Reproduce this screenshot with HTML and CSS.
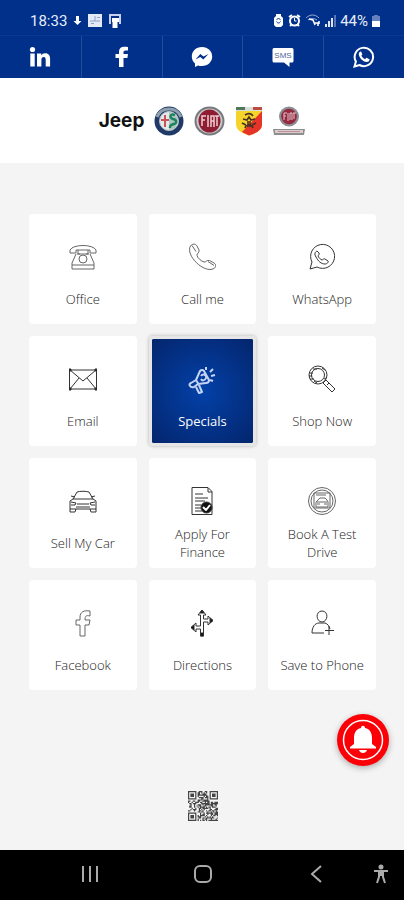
FILE: index.html
```html
<!DOCTYPE html>
<html lang="en">
<head>
  <meta charset="UTF-8">
  <title>Digital Business Card</title>
  <meta name="viewport" content="width=device-width, initial-scale=1.0">
  <link rel="stylesheet" href="styles.css">
</head>
<body>
  <div class="status-bar">
    <div class="status-group">
      <span>18:33</span>
      <svg width="9" height="12" viewBox="0 0 9 12" fill="#fff"><path d="M3 1h3v5h2.500L4.500 10 .5 6H3z"/></svg>
      <svg width="14" height="13" viewBox="0 0 14 13"><path fill="#e4e9f6" d="M0 0h14v13H0z"/><path stroke="#8e9fce" d="M7 2v5M2 7h10M3 9.500h3M9 3.500h3" fill="none"/></svg>
      <svg width="14" height="14" viewBox="0 0 14 14"><path fill="none" stroke="#c9d2ea" stroke-width="2" d="M2 10V1h10v9"/><path fill="#fff" d="M4 4h7v4H9.500v6h-5V8H4z"/></svg>
    </div>
    <div class="status-group right">
      <svg width="11" height="13" viewBox="0 0 11 13"><path fill="#fff" d="M3 0h5v2l2 2v7l-2 2H3l-2-2V4l2-2z"/><path fill="none" stroke="#00308a" d="M3.500 6c1-2 3-2 4 0M3.500 7.500c1 2 3 2 4 0"/></svg>
      <svg width="13" height="13" viewBox="0 0 13 13"><circle cx="6.500" cy="7" r="4.500" fill="none" stroke="#fff" stroke-width="2"/><path fill="none" stroke="#fff" stroke-width="2" d="M1 3l3-2M12 3L9 1M2 12l2-2M11 12l-2-2"/><path fill="none" stroke="#fff" d="M6.500 4v3h2"/></svg>
      <svg width="16" height="13" viewBox="0 0 16 13"><path fill="none" stroke="#9fafd8" d="M1 4c4-4 9-4 13 0M3 6c3-2 6-2 9 0"/><path fill="none" stroke="#fff" stroke-width="1.500" d="M4 5l4 1 2 5M10 9h3v3M14 7v3"/></svg>
      <svg width="11" height="12" viewBox="0 0 11 12"><path fill="#dfe5f4" d="M0 9h2v3H0zM3 6h2v6H3zM6 3h2v9H6z"/><path fill="#5a76b6" d="M9 0h2v12H9z"/></svg>
      <span>44%</span>
      <svg width="8" height="12" viewBox="0 0 8 12"><path fill="#6480bd" d="M2 0h4v1h2v5H0V1h2z"/><path fill="#fff" d="M0 6h8v6H0z"/></svg>
    </div>
  </div>

  <nav class="social">
    <a href="#" aria-label="LinkedIn">
      <svg width="22" height="22" viewBox="0 0 22 22" fill="#fff"><circle cx="3.500" cy="3.500" r="2.600"/><path d="M1.300 7.500h4.400V20.500H1.300zM8 7.500h4.200v1.700c.8-1.300 2-2 3.900-2 3.800 0 5 2.400 5 5.900v7.400h-4.400v-6.600c0-1.900-.5-3-1.900-3-1.700 0-2.400 1.200-2.400 3v6.600H8z"/></svg>
    </a>
    <a href="#" aria-label="Facebook">
      <svg width="22" height="22" viewBox="0 0 22 22" fill="#fff"><path d="M8 21v-9H4.500V8H8V5.500C8 2.300 10 .7 13 .7c1.800 0 3.300.1 4 .2v3.600h-2.500c-1.600 0-2 .8-2 1.900V8H17l-.6 4h-3.900v9z"/></svg>
    </a>
    <a href="#" aria-label="Messenger">
      <svg width="22" height="22" viewBox="0 0 22 22"><path fill="#fff" d="M11 1C5 1 .8 5.200.8 10.600c0 2.900 1.200 5.300 3.200 7V21l3-1.500c1.200.4 2.600.6 4 .6 6 0 10.200-4.200 10.200-9.500S17 1 11 1z"/><path fill="#00308a" d="M4.500 13.500L9.300 8l3.200 2.600 5-2.600-5.200 5.500-3-2.500z"/></svg>
    </a>
    <a href="#" aria-label="SMS">
      <svg width="22" height="22" viewBox="0 0 22 22"><path fill="#fff" d="M2 2h18q1.500 0 1.500 1.500v11.500q0 1.500-1.500 1.500h-2.500V21L12 16.500H2Q.5 16.500.5 15V3.500Q.5 2 2 2z"/><text class="sms-text" x="11" y="12" text-anchor="middle">SMS</text></svg>
    </a>
    <a href="#" aria-label="WhatsApp">
      <svg width="22" height="22" viewBox="0 0 22 22"><path fill="none" stroke="#fff" stroke-width="2" d="M1.500 20.500l1.400-5A9.200 9.200 0 1 1 6.500 19z"/><path fill="#fff" d="M7.500 5.500c-1 .3-1.900 1.500-1.700 2.900.5 3.500 4 7 7.700 7.600 1.500.2 2.800-.8 3-2 .1-.7 0-.9-.4-1.100l-2.200-1c-.5-.2-.7 0-1 .3l-.8 1c-1.700-.6-3-1.900-3.700-3.400l.7-1c.3-.4.2-.6 0-1l-.8-1.900c-.2-.4-.4-.5-.8-.4z"/></svg>
    </a>
  </nav>

  <header class="brands">
    <span class="jeep">Jeep</span>
    <svg width="30" height="30" viewBox="0 0 30 30" role="img" aria-label="Alfa Romeo">
      <circle cx="15" cy="15" r="14.500" fill="#203a68"/>
      <path d="M3 11a13 13 0 0 1 24 0" fill="none" stroke="#8ea0ad" stroke-width="3"/>
      <circle cx="15" cy="15" r="9.500" fill="#e5e8e6" stroke="#b7c1c7"/>
      <path d="M15 6a9 9 0 0 1 0 18z" fill="#a7c8bd"/>
      <path d="M7 14h8M11 9v12" stroke="#c9525a" stroke-width="2"/>
      <path d="M21 9c-5-2-6 3-2 4s4 4 1 5-4 1-4 4" fill="none" stroke="#1e8262" stroke-width="2.500"/>
    </svg>
    <svg width="31" height="30" viewBox="0 0 31 30" role="img" aria-label="Fiat">
      <ellipse cx="15.500" cy="15" rx="15" ry="14.500" fill="#77797c"/>
      <ellipse cx="15.500" cy="15" rx="13" ry="12.500" fill="#c9c9cb"/>
      <ellipse cx="15.500" cy="15" rx="11" ry="11.500" fill="#8e1d32"/>
      <path d="M8 20V10h4M8 14h3M14 9v12M17 21V10h3v11M17 15h3M21 10h4M23 10v10" fill="none" stroke="#edcbd1" stroke-width="1.500"/>
    </svg>
    <svg width="28" height="30" viewBox="0 0 28 30" role="img" aria-label="Abarth">
      <path d="M1 1h26v17c0 6-5 9-13 11.500C6 27 1 24 1 18z" fill="#f5d32a"/>
      <path d="M27 5v13c0 6-5 9-13 11.500L7 26z" fill="#e6342a"/>
      <path d="M1 1h26v4H1z" fill="#d8ddd6"/><path d="M1 1h9v3H1z" fill="#53775d"/><path d="M18 1h9v3h-9z" fill="#bd4b43"/>
      <path d="M10 9c3-2 6-2 8 1M8 13l4 1 2-3 2 3 4-1M7 17l4 2M21 17l-4 2M10 22c1-4 7-4 8 0M13 15v6M15 15v6" fill="none" stroke="#4a3023" stroke-width="1.600"/>
    </svg>
    <svg width="32" height="30" viewBox="0 0 32 30" role="img" aria-label="Fiat Professional">
      <circle cx="16" cy="10.500" r="10" fill="#8c9095"/><circle cx="16" cy="10.500" r="7.800" fill="#942940"/>
      <path d="M11 14V7h3M11 10h2M15 7v8M17 14V7h2v7M20 7h3M21 7v6" fill="none" stroke="#e6c8cf"/>
      <path d="M0 23h32l-1 6H1z" fill="#8e8e90"/><path d="M2 24h28v3H2z" fill="#d8cbcc"/><path d="M5 25.500h22" stroke="#c58f97"/>
    </svg>
  </header>

  <main class="content">
    <div class="grid">
      <a href="#" class="card">
        <svg viewBox="0 0 28 28"><path d="M1 10V7c3-6 23-6 26 0v3h-6V7H7v3zM9 7v4h10V7M7 11l-4 9v6h22v-6l-4-9M3 22h22M8 11h3M17 11h3"/><circle cx="14" cy="16" r="4"/></svg>
        <span>Office</span>
      </a>
      <a href="#" class="card">
        <svg viewBox="0 0 28 28"><path d="M2.500 3c2-2.500 5-2.500 6.500 0l2 4c1 2.500-2.500 3.500-2 5.500 1 3 4 5.500 7 6.500 2 .5 3-2.500 5.500-1.500l4.500 2.500c2.500 1.500 2 4 0 5.500C16 31-3 12 2.500 3zM4 2.500l4 6M20 18.500l6 4"/></svg>
        <span>Call me</span>
      </a>
      <a href="#" class="card dark">
        <svg viewBox="0 0 28 28"><path d="M2 26l2-7a12 12 0 1 1 5 5zM9 8c-2 1-3 3-1 6 2 4 5 7 9 7 2 0 4-2 3-3l-3-2c-1-1-2 1-3 1-2-1-3-2-4-4 0-1 2-1 1-3z"/></svg>
        <span>WhatsApp</span>
      </a>
      <a href="#" class="card dark">
        <svg viewBox="0 0 28 28"><path d="M.5 5h27v19H.5zM1 5l13 11L27 5M1 24l9-11M27 24l-9-11"/><path class="solid" d="M0 4h2v2H0zM26 4h2v2h-2zM0 23h2v2H0zM26 23h2v2h-2z"/></svg>
        <span>Email</span>
      </a>
      <a href="#" class="card active">
        <svg viewBox="0 0 28 28"><path d="M3 17l5-3 4-9q2-2 4 0l5 9q0 3-3 3l-8 1-4 3c-4 1-6-3-3-4zM8 14l3 5M8 21l3 6 3-1-3-7M13 10c2-3 6-1 5 2s-4 3-5 1M18 4V1M22 6l3-3M23 10l4-1M22 14l3 1"/></svg>
        <span>Specials</span>
      </a>
      <a href="#" class="card dark">
        <svg viewBox="0 0 28 28"><circle cx="10" cy="10" r="9"/><circle cx="10" cy="10" r="6.500"/><path d="M16 17l2-2 9 9-3 3-9-9zM19 20l2-2M2 8h3M1 11h3M2 14h4M5 4h4M6 16l3 2M14 3l3 2M16 14l2-1"/></svg>
        <span>Shop Now</span>
      </a>
      <a href="#" class="card dark">
        <svg viewBox="0 0 28 28"><path d="M4 12l4-7c3-1 9-1 12 0l4 7 3 2v8H1v-8zM4 12h20M2 9l4 1M26 9l-4 1M1 22v3h5l1-3M27 22v3h-5l-1-3M8 17h12M7 20h14M2 15l5 1-1 2H2M26 15l-5 1 1 2h4"/></svg>
        <span>Sell My Car</span>
      </a>
      <a href="#" class="card dark">
        <svg viewBox="0 0 28 28"><path d="M4 .5h16l4 4v23H4zM20 1v4h4M7 7h8M7 11h13M7 14h10M7 18h6M7 21h6M7 24h7"/><circle class="solid" cx="18.500" cy="20.500" r="5.500"/><path class="check" d="M15 20l3 3 4-5"/></svg>
        <span>Apply For<br>Finance</span>
      </a>
      <a href="#" class="card">
        <svg viewBox="0 0 28 28"><circle cx="14" cy="14" r="13.500"/><circle cx="14" cy="14" r="11"/><path d="M6 6h16v15H6zM8 8h10M10 13l2-2h5l2 2 1 2v5H8v-5zM9 15h10M9 17h3M16 17h3"/></svg>
        <span>Book A Test<br>Drive</span>
      </a>
      <a href="#" class="card">
        <svg viewBox="0 0 28 28"><path d="M11 27V16H7v-5h4V8c0-5 4-7 10-6v5c-4-1-5 0-5 4h5l-1 5h-4v11z"/></svg>
        <span>Facebook</span>
      </a>
      <a href="#" class="card dark">
        <svg viewBox="0 0 28 28"><path d="M12.500 27v-7H8v3l-5-4.500L8 14v3h4.500V6H10l4-5 4 5h-2.500v4H20V7l5 4.500-5 4.500v-3h-4.500v14z"/><path class="solid" d="M12.500 24h3v3h-3zM3 18.500L6 16v5zM25 11.500L22 9v5zM14 1l2 3h-4z"/></svg>
        <span>Directions</span>
      </a>
      <a href="#" class="card dark">
        <svg viewBox="0 0 28 28"><path d="M14 2c7 0 6 11 0 11S7 2 14 2zM16 24H4c0-6 3-10 7-10h6c3 1 4 3 5 6M21 17v9M17 21.500h9"/></svg>
        <span>Save to Phone</span>
      </a>
    </div>

    <svg class="qr" id="qr" viewBox="0 0 25 25" role="img" aria-label="QR code"></svg>
  </main>

  <button class="bell" aria-label="Notifications">
    <svg width="42" height="42" viewBox="0 0 42 42"><circle cx="21" cy="21" r="19.500" fill="none" stroke="#fff" stroke-width="1.500"/><path fill="#fff" d="M19 9c0-3 4-3 4 0 5 1 7 5 7 10v6l4 3v1.500H8V28l4-3v-6c0-5 2-9 7-10zM17 31h8c-1 4-7 4-8 0z"/></svg>
  </button>

  <footer class="nav-bar">
    <button aria-label="Recent apps"><svg width="20" height="20" viewBox="0 0 20 20"><path d="M3 2v16M10 2v16M17 2v16"/></svg></button>
    <button aria-label="Home"><svg width="20" height="20" viewBox="0 0 20 20"><rect x="2" y="2" width="16" height="16" rx="5"/></svg></button>
    <button aria-label="Back"><svg width="20" height="20" viewBox="0 0 20 20"><path d="M15 2l-9 8 9 8"/></svg></button>
    <button class="access" aria-label="Accessibility"><svg width="18" height="20" viewBox="0 0 18 20"><circle cx="9" cy="3" r="1.500"/><path d="M2 7h14M9 7v5M7 8v5l-2 6M11 8v5l2 6"/></svg></button>
  </footer>

  <script>
    // three finder squares in the corners, the rest is data
    const size = 25;
    const corners = [[0, 0], [18, 0], [0, 18]];
    let seed = 41;
    let path = '';

    function isDark(x, y) {
      seed = (seed * 1103515245 + 12345) % 2147483648;
      for (const [cx, cy] of corners) {
        const dx = Math.abs(x - cx - 3);
        const dy = Math.abs(y - cy - 3);
        const ring = Math.max(dx, dy);
        if (ring <= 4) return ring !== 2 && ring !== 4;
      }
      return seed / 2147483648 > 0.45;
    }

    for (let y = 0; y < size; y++) {
      for (let x = 0; x < size; x++) {
        if (isDark(x, y)) path += `M${x} ${y}h1v1h-1z`;
      }
    }
    document.getElementById('qr').innerHTML = `<path d="${path}"/>`;
  </script>
</body>
</html>
```
FILE: styles.css
```css
* {
  box-sizing: border-box;
}
body {
  margin: 0;
  min-height: 100vh;
  display: flex;
  flex-direction: column;
  font-family: "Open Sans", sans-serif;
  background: #f4f4f4;
}
a {
  color: inherit;
  text-decoration: none;
}
svg {
  display: block;
  flex-shrink: 0;
}
button {
  padding: 0;
  border: none;
  background: none;
  cursor: pointer;
}

.status-bar {
  height: 35px;
  padding: 6px 24px 0 30px;
  display: flex;
  justify-content: space-between;
  align-items: center;
  background: #00308a;
  color: #e8edf8;
  font-family: Roboto, sans-serif;
  font-size: 15px;
}
.status-group {
  display: flex;
  align-items: center;
  gap: 6px;
}
.status-group.right {
  gap: 4px;
}

.social {
  height: 43px;
  display: grid;
  grid-template-columns: repeat(5, 1fr);
  background: #00308a;
  border-top: 1px solid #0b3990;
}
.social a {
  display: flex;
  justify-content: center;
  align-items: center;
}
.social a + a {
  border-left: 1px solid #224b9b;
}
.sms-text {
  font-family: "Liberation Sans", sans-serif;
  font-size: 8px;
  fill: #50669b;
}

.brands {
  height: 85px;
  display: flex;
  justify-content: center;
  align-items: center;
  gap: 10px;
  background: #fff;
}
.jeep {
  font-family: Inter, sans-serif;
  font-size: 19px;
  line-height: 24px;
  font-weight: 700;
  color: #111;
}

.content {
  flex: 1;
  padding: 51px 28px 29px 29px;
  display: flex;
  flex-direction: column;
  justify-content: space-between;
}
.grid {
  display: grid;
  grid-template-columns: repeat(3, 1fr);
  grid-auto-rows: 110px;
  gap: 12px;
}
.card {
  display: flex;
  flex-direction: column;
  align-items: center;
  padding-top: 29px;
  border-radius: 4px;
  background: #fff;
  color: #222;
  font-size: 13px;
  font-weight: 300;
  line-height: 18px;
  text-align: center;
}
.card svg {
  width: 28px;
  height: 28px;
  fill: none;
  stroke: #666;
  stroke-linejoin: round;
}
.card.dark svg {
  stroke: #333;
}
.card span {
  flex: 1;
  display: flex;
  align-items: center;
  padding-top: 3px;
}
.card svg .solid {
  fill: #111;
}
.card svg .check {
  stroke: #fff;
  stroke-width: 2;
}
.card.active {
  padding-top: 27px;
  border: 3px solid #e6e6e6;
  background: radial-gradient(circle, #0341a8, #04256d) padding-box;
  box-shadow: 0 0 3px 1px #ccc;
  color: #fff;
  font-weight: 400;
}
.card.active svg {
  stroke: #c4d4f5;
  stroke-width: 2;
}
.card.active span {
  padding-top: 4px;
}

.qr {
  width: 30px;
  height: 30px;
  align-self: center;
  fill: #444;
}

.bell {
  position: fixed;
  right: 15px;
  bottom: 134px;
  width: 52px;
  height: 52px;
  display: flex;
  justify-content: center;
  align-items: center;
  border-radius: 50%;
  background: #fb0007;
  box-shadow: 0 2px 6px rgba(0, 0, 0, 0.3);
}

.nav-bar {
  height: 50px;
  padding: 0 14px 2px 34px;
  display: grid;
  grid-template-columns: repeat(3, 1fr) 18px;
  align-items: center;
  background: #000;
}
.nav-bar button {
  display: flex;
  justify-content: center;
}
.nav-bar svg {
  fill: none;
  stroke: #aaa;
  stroke-width: 2;
}
.nav-bar .access svg {
  fill: #aaa;
}
```
